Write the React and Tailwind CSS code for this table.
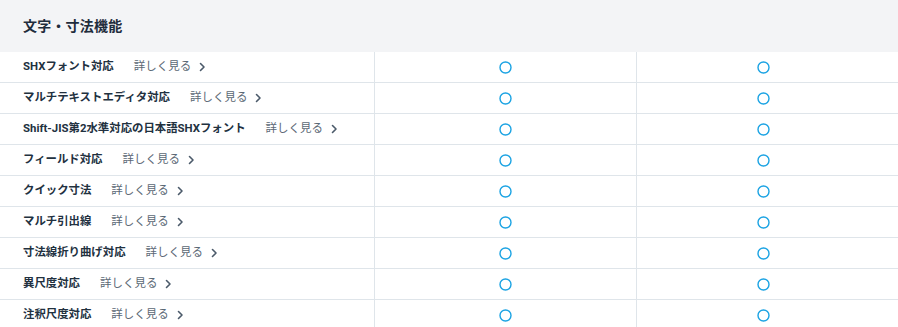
const ROWS = [
  'SHXフォント対応',
  'マルチテキストエディタ対応',
  'Shift-JIS第2水準対応の日本語SHXフォント',
  'フィールド対応',
  'クイック寸法',
  'マルチ引出線',
  '寸法線折り曲げ対応',
  '異尺度対応',
  '注釈尺度対応',
];

function Chevron() {
  return (
    <svg width="7" height="10" viewBox="0 0 7 10" fill="none" className="ml-[8px]">
      <path d="M1.5 1.5 L5 5 L1.5 8.5" stroke="#4b5a6a" strokeWidth="1.6" strokeLinecap="round" strokeLinejoin="round" />
    </svg>
  );
}

function Mark() {
  return (
    <svg width="13" height="13" viewBox="0 0 13 13" fill="none">
      <circle cx="6.5" cy="6.5" r="5.5" stroke="#1ba3e3" strokeWidth="1.4" />
    </svg>
  );
}

export default function App() {
  return (
    <div className="w-[898px] h-[327px] overflow-hidden bg-white" style={{ fontFamily: 'Roboto, "Noto Sans CJK JP", sans-serif' }}>
      <div className="h-[52px] bg-[#f3f4f6] flex items-center pl-[23px]">
        <h2 className="text-[14px] font-bold text-[#1f2d3d] tracking-[0.2px]">文字・寸法機能</h2>
      </div>
      {ROWS.map(label => (
        <div key={label} className="grid grid-cols-[375px_262px_1fr] h-[31px] border-b border-[#dfe5ea]">
          <div className="flex items-center pl-[23px] border-r border-[#dfe5ea]">
            <span className="text-[11.4px] font-bold text-[#22313f]">{label}</span>
            <span className="ml-[20px] text-[11.5px] text-[#5b6875]">詳しく見る</span>
            <Chevron />
          </div>
          <div className="flex items-center justify-center border-r border-[#dfe5ea]">
            <Mark />
          </div>
          <div className="flex items-center justify-center pr-[9px]">
            <Mark />
          </div>
        </div>
      ))}
    </div>
  );
}
